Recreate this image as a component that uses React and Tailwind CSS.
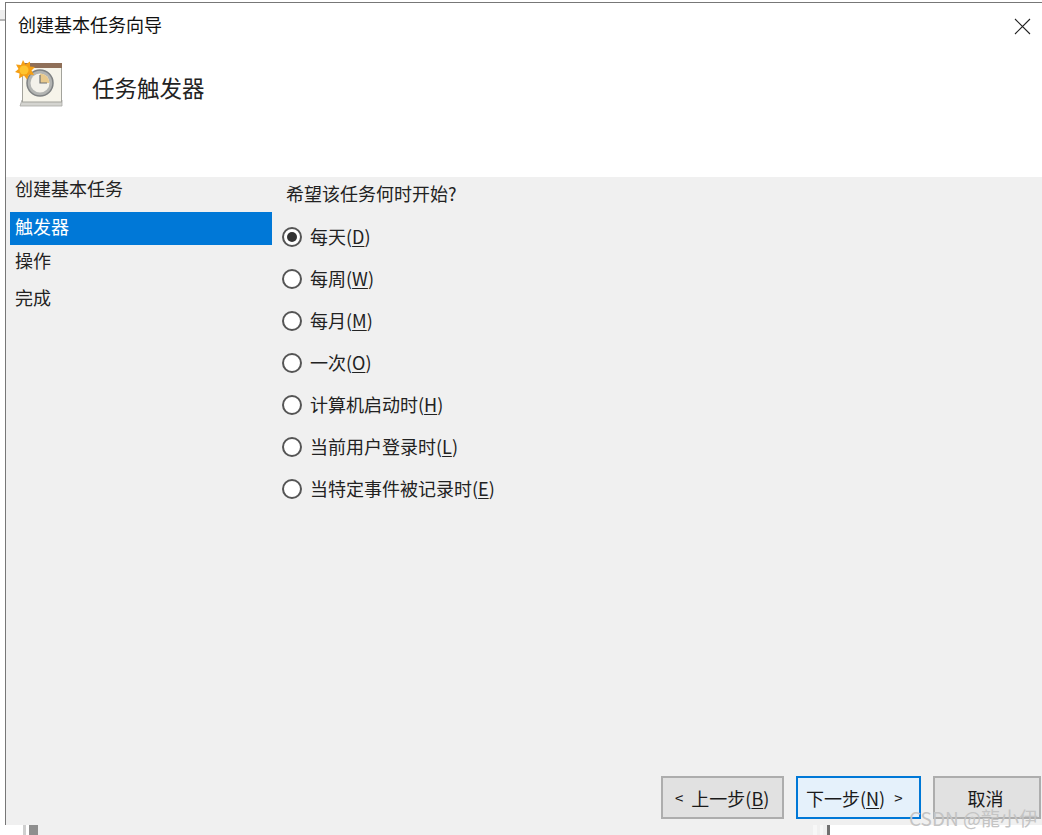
import React from 'react';

const FONT = { fontFamily: '"Noto Sans CJK SC", "Liberation Sans", sans-serif' };

const options = [
  { label: '每天', key: 'D', checked: true },
  { label: '每周', key: 'W' },
  { label: '每月', key: 'M' },
  { label: '一次', key: 'O' },
  { label: '计算机启动时', key: 'H' },
  { label: '当前用户登录时', key: 'L' },
  { label: '当特定事件被记录时', key: 'E' },
];

const TaskIcon = () => (
  <svg width="48" height="48" viewBox="0 0 48 48">
    <path d="M7 40 L5 46 H47 V40 Z" fill="#d4d4d0" stroke="#a8a8a4" strokeWidth="0.8" />
    <rect x="7.500" y="4" width="39" height="38" fill="#f6f4ea" stroke="#a3a39c" />
    <rect x="7" y="3" width="40" height="5" fill="#8f6f58" />
    <circle cx="25" cy="23" r="13" fill="#b2b4b2" stroke="#7f8283" strokeWidth="1.5" />
    <circle cx="25" cy="23" r="9.500" fill="#f3f1ea" />
    <path d="M25 13.500 A9.500 9.500 0 0 1 34.500 23 H25 Z" fill="#e8c98c" />
    <path d="M25 15 V23 H32" fill="none" stroke="#6f7274" strokeWidth="1.2" />
    <path
      d="M8 0 L10.500 4.500 L15 1.500 L15 6.500 L20 7 L16.500 10.500 L19 15 L14 14.500 L12 19.500 L9 15.500 L4 18.500 L4.500 13.500 L0 12 L3.500 9 L1 4.500 L6 5 Z"
      fill="#f59f14"
    />
    <circle cx="9" cy="10" r="4.500" fill="#ffc42e" />
  </svg>
);

const Radio = ({ checked }) => (
  <span className="w-[20px] h-[20px] rounded-full border-2 border-[#555555] bg-white flex items-center justify-center shrink-0">
    {checked && <span className="w-[10px] h-[10px] rounded-full bg-[#333333]" />}
  </span>
);

const WizardButton = ({ className, children }) => (
  <button className={`h-[43px] border-2 text-[18px] leading-none text-[#1a1a1a] flex items-center ${className}`}>
    {children}
  </button>
);

const App = () => {
  return (
    <div className="relative w-[1042px] h-[835px] bg-white overflow-hidden flex flex-col" style={FONT}>
      <div className="flex h-[825px] shrink-0">
        {/* sliver of the window behind */}
        <div className="w-[5px] shrink-0">
          <div className="mt-[10px] h-[11px] bg-[#eeeeee] border-b-2 border-[#b5b5b5]" />
        </div>

        <div className="flex-1 flex flex-col mt-[2px] border-l border-t border-[#777777]">
          {/* title bar + heading */}
          <div className="h-[174px] bg-white shrink-0 flex flex-col">
            <div className="h-[42px] flex items-center justify-between pl-[12px] pr-[11px]">
              <span className="text-[18px] leading-none text-[#111111]">创建基本任务向导</span>
              <svg width="17" height="17" viewBox="0 0 17 17" className="mt-[4px]">
                <path d="M1 1 L16 16 M16 1 L1 16" stroke="#222222" strokeWidth="1.1" fill="none" />
              </svg>
            </div>
            <div className="flex items-start pl-[9px] mt-[15px]">
              <TaskIcon />
              <span className="ml-[29px] mt-[16px] text-[22.500px] leading-none text-[#222222]">任务触发器</span>
            </div>
          </div>

          <div className="flex-1 bg-[#f0f0f0] flex min-h-0">
            {/* steps */}
            <div className="w-[266px] shrink-0 pl-[4px] flex flex-col text-[18px] leading-none text-[#222222]">
              <div className="h-[22px] mb-[13px] flex items-center pl-[5px]">创建基本任务</div>
              <div className="h-[33px] flex items-center pl-[5px] bg-[#0078d7] text-white pb-[6px]">触发器</div>
              <div className="h-[33px] mb-[3px] flex items-center pl-[5px] pb-[3px]">操作</div>
              <div className="h-[33px] flex items-center pl-[5px] pb-[2px]">完成</div>
            </div>

            {/* options */}
            <div className="flex-1 flex flex-col">
              <div className="pl-[14px] h-[32px] flex items-center text-[18px] leading-none text-[#222222]">
                希望该任务何时开始?
              </div>
              <div className="flex flex-col pl-[10px] mt-[7px]">
                {options.map(opt => (
                  <label key={opt.key} className="h-[42px] flex items-center gap-[8px] text-[18px] leading-none text-[#222222]">
                    <Radio checked={opt.checked} />
                    <span className="-mt-[2px]">
                      {opt.label}(<span className="underline underline-offset-2">{opt.key}</span>)
                    </span>
                  </label>
                ))}
              </div>
              <div className="mt-auto mb-[6px] flex justify-end pr-[1px]">
                <WizardButton className="w-[123px] bg-[#e1e1e1] border-[#adadad] mr-[12px] pl-[12px]">
                  <span className="mr-[8px] text-[15px]">&lt;</span>上一步(<span className="underline underline-offset-2">B</span>)
                </WizardButton>
                <WizardButton className="w-[125px] bg-[#e5f1fb] border-[#0078d7] mr-[12px] pl-[8px]">
                  下一步(<span className="underline underline-offset-2">N</span>)<span className="ml-[9px] text-[15px]">&gt;</span>
                </WizardButton>
                <WizardButton className="w-[108px] bg-[#e1e1e1] border-[#adadad] justify-center pr-[3px]">取消</WizardButton>
              </div>
            </div>
          </div>
        </div>
      </div>

      {/* what shows behind the dialog */}
      <div className="flex-1 flex items-stretch bg-white">
        <div className="ml-[23px] w-[3px] bg-[#cfcfcf]" />
        <div className="ml-[3px] w-[9px] bg-[#8f8f8f]" />
        <div className="flex-1 bg-[#f0f0f0] flex justify-end">
          <div className="w-[4px] bg-[#f7f7f7]" />
          <div className="ml-[3px] w-[3px] bg-[#f7f7f7]" />
          <div className="ml-[4px] w-[3px] bg-[#707070]" />
        </div>
        <div className="w-[212px]" />
      </div>

      {/* CSDN watermark over the corner */}
      <span className="absolute right-[4px] top-[808px] text-[19px] leading-none text-[#c4c4c4]">CSDN @龍小伊</span>
    </div>
  );
};

export default App;
